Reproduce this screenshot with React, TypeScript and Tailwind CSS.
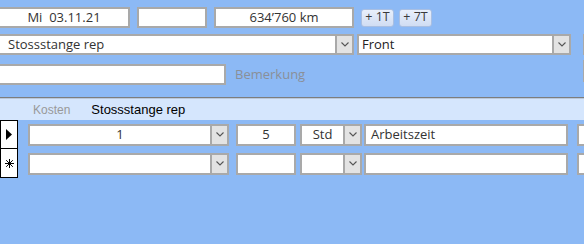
import React from "react";

const FONT = { fontFamily: '"Open Sans", "Noto Sans", sans-serif' };

function Chevron() {
  return (
    <svg width="8" height="5" viewBox="0 0 8 5" className="block">
      <path d="M0.5 0.5 L4 4 L7.5 0.5" fill="none" stroke="#555" strokeWidth="1.1" />
    </svg>
  );
}

function DropBtn() {
  return (
    <div className="w-[17px] h-full bg-[#e3e3e3] border-l-2 border-[#a9a9a9] flex items-center justify-center shrink-0">
      <Chevron />
    </div>
  );
}

const box = "shrink-0 bg-white border-2 border-[#a9a9a9]";
const btn =
  "shrink-0 w-[33px] h-[18px] rounded-[3px] border border-[#a9bfe2] bg-gradient-to-b from-[#e8effb] to-[#d0ddf3] flex items-center justify-center text-[12.5px] leading-none text-[#3a3a3a]";

export default function App() {
  return (
    <div
      className="w-[584px] h-[244px] bg-[#8cb9f5] overflow-hidden relative text-[#333]"
      style={FONT}
    >
      {/* top form section */}
      <div className="pt-[7px] h-[97px] flex flex-col">
        {/* row 1 */}
        <div className="flex items-center h-[21px] -ml-[2px]">
          <div className={box + " w-[132px] h-[21px] flex items-center justify-center text-[13px] leading-none"}>
            Mi&nbsp; 03.11.21
          </div>
          <div className={box + " ml-[7px] w-[70px] h-[21px]"} />
          <div className={box + " ml-[7px] w-[140px] h-[21px] flex items-center justify-center text-[13px] leading-none"}>
            634’760 km
          </div>
          <div className={btn + " ml-[7px]"}>+ 1T</div>
          <div className={btn + " ml-[5px]"}>+ 7T</div>
        </div>
        {/* row 2 */}
        <div className="flex items-center h-[21px] mt-[6px] -ml-[2px]">
          <div className={box + " w-[356px] h-[21px] flex items-center"}>
            <div className="flex-1 pl-[8px] text-[13px] leading-none">Stossstange rep</div>
            <DropBtn />
          </div>
          <div className={box + " ml-[3px] w-[214px] h-[21px] flex items-center"}>
            <div className="flex-1 pl-[3px] text-[13px] leading-none text-[#222]">Front</div>
            <DropBtn />
          </div>
          <div className={box + " ml-[12px] w-[20px] h-[21px]"} />
        </div>
        {/* row 3 */}
        <div className="flex items-center h-[21px] mt-[9px] -ml-[2px]">
          <div className={box + " w-[228px] h-[21px]"} />
          <div className="shrink-0 ml-[9px] text-[13px] leading-none text-[#8a8f98]">Bemerkung</div>
          <div className={box + " ml-auto w-[20px] h-[22px] -mt-[7px] -mr-[19px]"} />
        </div>
      </div>

      {/* separator line */}
      <div className="h-[1px] bg-[#7d7d7d]" />
      <div className="h-[1px] bg-[#b9c8dc]" />

      {/* header band */}
      <div
        className="h-[21px] bg-[#d5e6fd] flex items-center"
        style={{ fontFamily: '"Liberation Sans", Arial, sans-serif' }}
      >
        <div className="ml-[33px] text-[12px] text-[#999]">Kosten</div>
        <div className="ml-[21px] text-[13px] text-black">Stossstange rep</div>
      </div>

      {/* detail rows */}
      <div className="flex flex-col">
        {[0, 1].map((i) => (
          <div key={i} className="flex items-center h-[29px]">
            <div
              className={
                "w-[18px] h-full bg-white border-black border-l border-r border-b flex items-center justify-center shrink-0 " +
                (i === 0 ? "border-t" : "h-[30px]")
              }
            >
              {i === 0 ? (
                <svg width="6" height="11" viewBox="0 0 6 11" className="block ml-[-1px]">
                  <path d="M0 0 L6 5.5 L0 11 Z" fill="#000" />
                </svg>
              ) : (
                <svg width="9" height="9" viewBox="0 0 9 9" className="block">
                  <path
                    d="M4.5 0 V9 M0 4.5 H9 M1.2 1.2 L7.8 7.8 M7.8 1.2 L1.2 7.8"
                    stroke="#000"
                    strokeWidth="1"
                  />
                </svg>
              )}
            </div>
            <div className={box + " ml-[10px] w-[201px] h-[22px] flex items-center"}>
              <div className="flex-1 text-center text-[13px] leading-none">{i === 0 ? "1" : ""}</div>
              <DropBtn />
            </div>
            <div className={box + " ml-[7px] w-[60px] h-[22px] flex items-center justify-center text-[13px] leading-none"}>
              {i === 0 ? "5" : ""}
            </div>
            <div className={box + " ml-[4px] w-[62px] h-[22px] flex items-center"}>
              <div className="flex-1 text-center text-[13px] leading-none">{i === 0 ? "Std" : ""}</div>
              <DropBtn />
            </div>
            <div className={box + " ml-[2px] w-[204px] h-[22px] flex items-center pl-[5px] text-[13px] leading-none"}>
              {i === 0 ? "Arbeitszeit" : ""}
            </div>
            <div className={box + " ml-[9px] w-[20px] h-[22px]"} />
          </div>
        ))}
      </div>
    </div>
  );
}
